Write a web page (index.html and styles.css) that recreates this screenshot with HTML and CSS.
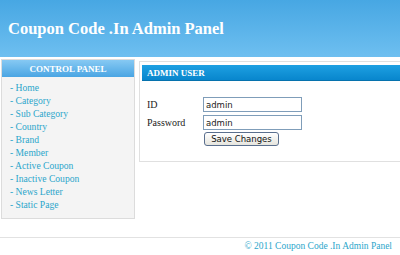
FILE: index.html
```html
<!DOCTYPE html>
<html lang="en">
<head>
  <meta charset="UTF-8">
  <title>Coupon Code .In Admin Panel</title>
  <link rel="stylesheet" href="styles.css">
</head>
<body>
  <div class="header">
    <h1>Coupon Code .In Admin Panel</h1>
  </div>

  <div class="wrap">
    <div class="sidebar">
      <div class="side-head">CONTROL PANEL</div>
      <ul class="menu">
        <li><a href="#">- Home</a></li>
        <li><a href="#">- Category</a></li>
        <li><a href="#">- Sub Category</a></li>
        <li><a href="#">- Country</a></li>
        <li><a href="#">- Brand</a></li>
        <li><a href="#">- Member</a></li>
        <li><a href="#">- Active Coupon</a></li>
        <li><a href="#">- Inactive Coupon</a></li>
        <li><a href="#">- News Letter</a></li>
        <li><a href="#">- Static Page</a></li>
      </ul>
    </div>

    <div class="main">
      <div class="bar">ADMIN USER</div>
      <form class="user-form">
        <label for="uid">ID</label>
        <input type="text" id="uid" value="admin">
        <label for="pwd">Password</label>
        <input type="text" id="pwd" value="admin">
        <span></span>
        <div><button type="submit">Save Changes</button></div>
      </form>
    </div>
  </div>

  <div class="footer">&copy; 2011 Coupon Code .In Admin Panel</div>
</body>
</html>
```

FILE: styles.css
```css
body {
  margin: 0;
  font-family: "Liberation Serif", "Times New Roman", serif;
  background: #fff;
  color: #222;
}
.header {
  height: 57px;
  display: flex;
  align-items: center;
  background: linear-gradient(#47a7e3, #6ebff0);
}
.header h1 {
  margin: 0 0 0 8px;
  font-size: 16.5px;
  color: #fff;
}
.wrap {
  display: flex;
  align-items: flex-start;
  margin-top: 2px;
}
.sidebar {
  width: 132px;
  height: 158px;
  margin-left: 1px;
  border: 1px solid #dcdcdc;
  background: #f4f4f4;
}
.side-head {
  height: 17px;
  line-height: 18px;
  text-align: center;
  font-size: 9px;
  font-weight: bold;
  color: #fff;
  background: linear-gradient(#86c9f3, #4aa5e3);
}
.menu {
  list-style: none;
  margin: 0;
  padding: 4px 0 0 8px;
}
.menu li {
  line-height: 13px;
  font-size: 9.6px;
}
.menu a {
  color: #2ba6cb;
  text-decoration: none;
}
.main {
  flex: 1;
  margin: 2px 0 0 4px;
  padding: 3px 0 0 2px;
  height: 96px;
  border: 1px solid #e0e0e0;
  border-right: none;
}
.bar {
  height: 16px;
  line-height: 16px;
  padding-left: 5px;
  font-size: 9px;
  font-weight: bold;
  color: #fff;
  background: linear-gradient(#1ea0e2, #0886cd);
  border-bottom: 1px solid #0672ad;
  box-sizing: border-box;
}
.user-form {
  display: grid;
  grid-template-columns: 56px 99px;
  row-gap: 3px;
  align-items: center;
  margin: 16px 0 0 5px;
  font-size: 10px;
}
.user-form input {
  box-sizing: border-box;
  width: 99px;
  height: 15px;
  padding: 0 0 0 2px;
  border: 1px solid #7f9db9;
  font-family: "DejaVu Sans", Tahoma, sans-serif;
  font-size: 8.5px;
  color: #222;
}
.user-form button {
  margin: -1px 0 0 1px;
  width: 75px;
  height: 14px;
  padding: 0;
  border: 1px solid #5a6f8e;
  border-radius: 3px;
  background: linear-gradient(#ffffff, #e6e5de);
  font-family: "DejaVu Sans", Tahoma, sans-serif;
  font-size: 8.5px;
  color: #111;
}
.footer {
  margin-top: 18px;
  border-top: 1px solid #e2e2e2;
  padding: 1px 8px 0 0;
  line-height: 14px;
  text-align: right;
  font-size: 9.5px;
  color: #2ba6cb;
}
```
